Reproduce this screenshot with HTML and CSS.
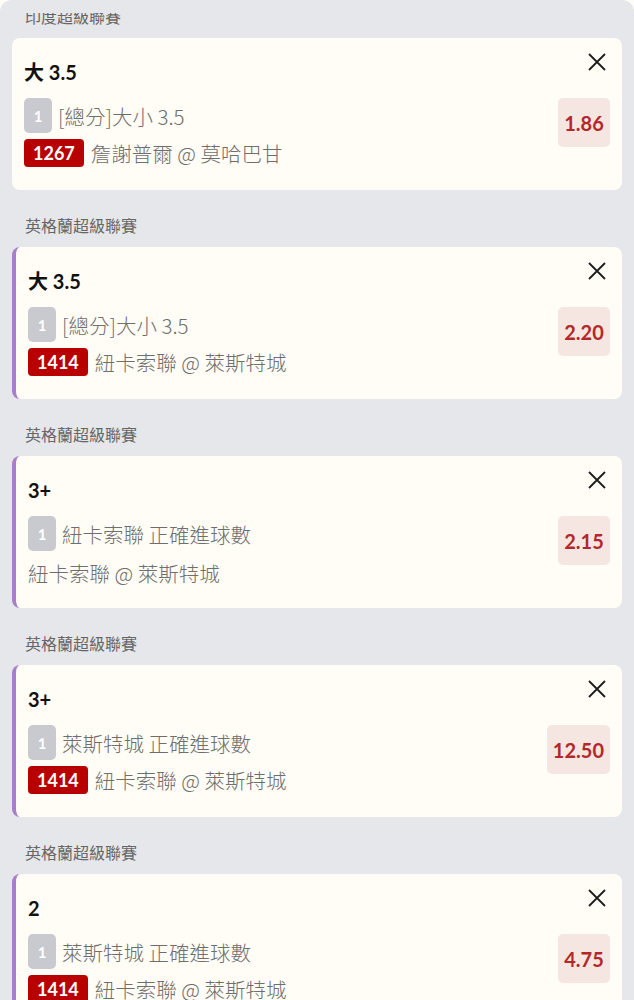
FILE: index.html
```html
<!DOCTYPE html>
<html lang="zh-Hant">
<head>
    <meta charset="UTF-8">
    <meta name="viewport" content="width=device-width, initial-scale=1.0">
    <title>投注單</title>
    <link rel="stylesheet" href="styles.css">
</head>
<body>
    <div class="sheet">
        <div class="topbar"></div>
        <div class="list">
            <div class="league">印度超級聯賽</div>
            <div class="card">
                <div class="info">
                    <div class="title">大 3.5</div>
                    <div class="row"><span class="leg">1</span><span class="text">[總分]大小 3.5</span></div>
                    <div class="row"><span class="code">1267</span><span class="text">詹謝普爾 @ 莫哈巴甘</span></div>
                </div>
                <div class="side">
                    <button class="close"><svg width="20" height="20" viewBox="0 0 20 20"><path d="M2 2L18 18M18 2L2 18" stroke="#1c1c1c" stroke-width="1.8" fill="none"/></svg></button>
                    <div class="odds">1.86</div>
                </div>
            </div>

            <div class="league">英格蘭超級聯賽</div>
            <div class="card active">
                <div class="info">
                    <div class="title">大 3.5</div>
                    <div class="row"><span class="leg">1</span><span class="text">[總分]大小 3.5</span></div>
                    <div class="row"><span class="code">1414</span><span class="text">紐卡索聯 @ 萊斯特城</span></div>
                </div>
                <div class="side">
                    <button class="close"><svg width="20" height="20" viewBox="0 0 20 20"><path d="M2 2L18 18M18 2L2 18" stroke="#1c1c1c" stroke-width="1.8" fill="none"/></svg></button>
                    <div class="odds">2.20</div>
                </div>
            </div>

            <div class="league">英格蘭超級聯賽</div>
            <div class="card active">
                <div class="info">
                    <div class="title">3+</div>
                    <div class="row"><span class="leg">1</span><span class="text">紐卡索聯 正確進球數</span></div>
                    <div class="row"><span class="text plain">紐卡索聯 @ 萊斯特城</span></div>
                </div>
                <div class="side">
                    <button class="close"><svg width="20" height="20" viewBox="0 0 20 20"><path d="M2 2L18 18M18 2L2 18" stroke="#1c1c1c" stroke-width="1.8" fill="none"/></svg></button>
                    <div class="odds">2.15</div>
                </div>
            </div>

            <div class="league">英格蘭超級聯賽</div>
            <div class="card active">
                <div class="info">
                    <div class="title">3+</div>
                    <div class="row"><span class="leg">1</span><span class="text">萊斯特城 正確進球數</span></div>
                    <div class="row"><span class="code">1414</span><span class="text">紐卡索聯 @ 萊斯特城</span></div>
                </div>
                <div class="side">
                    <button class="close"><svg width="20" height="20" viewBox="0 0 20 20"><path d="M2 2L18 18M18 2L2 18" stroke="#1c1c1c" stroke-width="1.8" fill="none"/></svg></button>
                    <div class="odds">12.50</div>
                </div>
            </div>

            <div class="league">英格蘭超級聯賽</div>
            <div class="card active">
                <div class="info">
                    <div class="title">2</div>
                    <div class="row"><span class="leg">1</span><span class="text">萊斯特城 正確進球數</span></div>
                    <div class="row"><span class="code">1414</span><span class="text">紐卡索聯 @ 萊斯特城</span></div>
                </div>
                <div class="side">
                    <button class="close"><svg width="20" height="20" viewBox="0 0 20 20"><path d="M2 2L18 18M18 2L2 18" stroke="#1c1c1c" stroke-width="1.8" fill="none"/></svg></button>
                    <div class="odds">4.75</div>
                </div>
            </div>
        </div>
    </div>
</body>
</html>
```

FILE: styles.css
```css
body {
    margin: 0;
    padding: 0;
    background-color: #fffdf5;
    font-family: Lato, "Noto Sans CJK TC", sans-serif;
    color: #222;
    height: 1000px;
    overflow: hidden;
}
.sheet {
    background-color: #e6e7ea;
    border-radius: 12px 12px 0 0;
    height: 1000px;
    overflow: hidden;
}
.topbar {
    position: relative;
    z-index: 1;
    height: 13px;
    background-color: #e6e7ea;
    border-radius: 12px 12px 0 0;
}
.list {
    margin-top: -32px;
    padding: 0 12px;
}
.league {
    padding: 25px 0 12px 13px;
    font-family: "Noto Sans CJK TC", sans-serif;
    font-size: 16px;
    line-height: 20px;
    color: #666;
}
.card {
    display: flex;
    justify-content: space-between;
    background-color: #fffdf5;
    border-radius: 8px;
    padding: 14px 12px 23px 12px;
}
.card.active {
    border-left: 4px solid #a97dc9;
}
.title {
    margin-top: 9px;
    font-size: 20px;
    line-height: 22px;
    font-weight: bold;
    color: #111;
}
.row {
    display: flex;
    align-items: center;
    height: 28px;
    margin-top: 6px;
}
.row:nth-of-type(2) {
    height: 35px;
    margin-top: 15px;
}
.leg {
    width: 28px;
    height: 35px;
    border-radius: 5px;
    background-color: #c9c9d0;
    color: #fff;
    font-size: 15px;
    font-weight: bold;
    display: flex;
    align-items: center;
    justify-content: center;
    margin-right: 6px;
}
.code {
    height: 28px;
    padding: 0 9px;
    border-radius: 4px;
    background-color: #b80000;
    color: #fff;
    font-size: 18px;
    font-weight: bold;
    display: flex;
    align-items: center;
    margin-right: 7px;
}
.text {
    font-family: "Noto Sans CJK TC", sans-serif;
    font-size: 20.5px;
    font-weight: 300;
    color: #6e6e6e;
}
.text.plain {
    margin-top: 4px;
}
.side {
    display: flex;
    flex-direction: column;
    align-items: flex-end;
}
.close {
    border: none;
    background: none;
    padding: 0;
    margin-right: 3px;
    width: 20px;
    height: 20px;
    cursor: pointer;
}
.close svg {
    display: block;
}
.odds {
    margin-top: 26px;
    min-width: 40px;
    height: 49px;
    padding: 0 6px;
    border-radius: 5px;
    background-color: #f6e6e1;
    color: #b3282a;
    font-size: 20px;
    font-weight: bold;
    display: flex;
    align-items: center;
    justify-content: center;
}
```
